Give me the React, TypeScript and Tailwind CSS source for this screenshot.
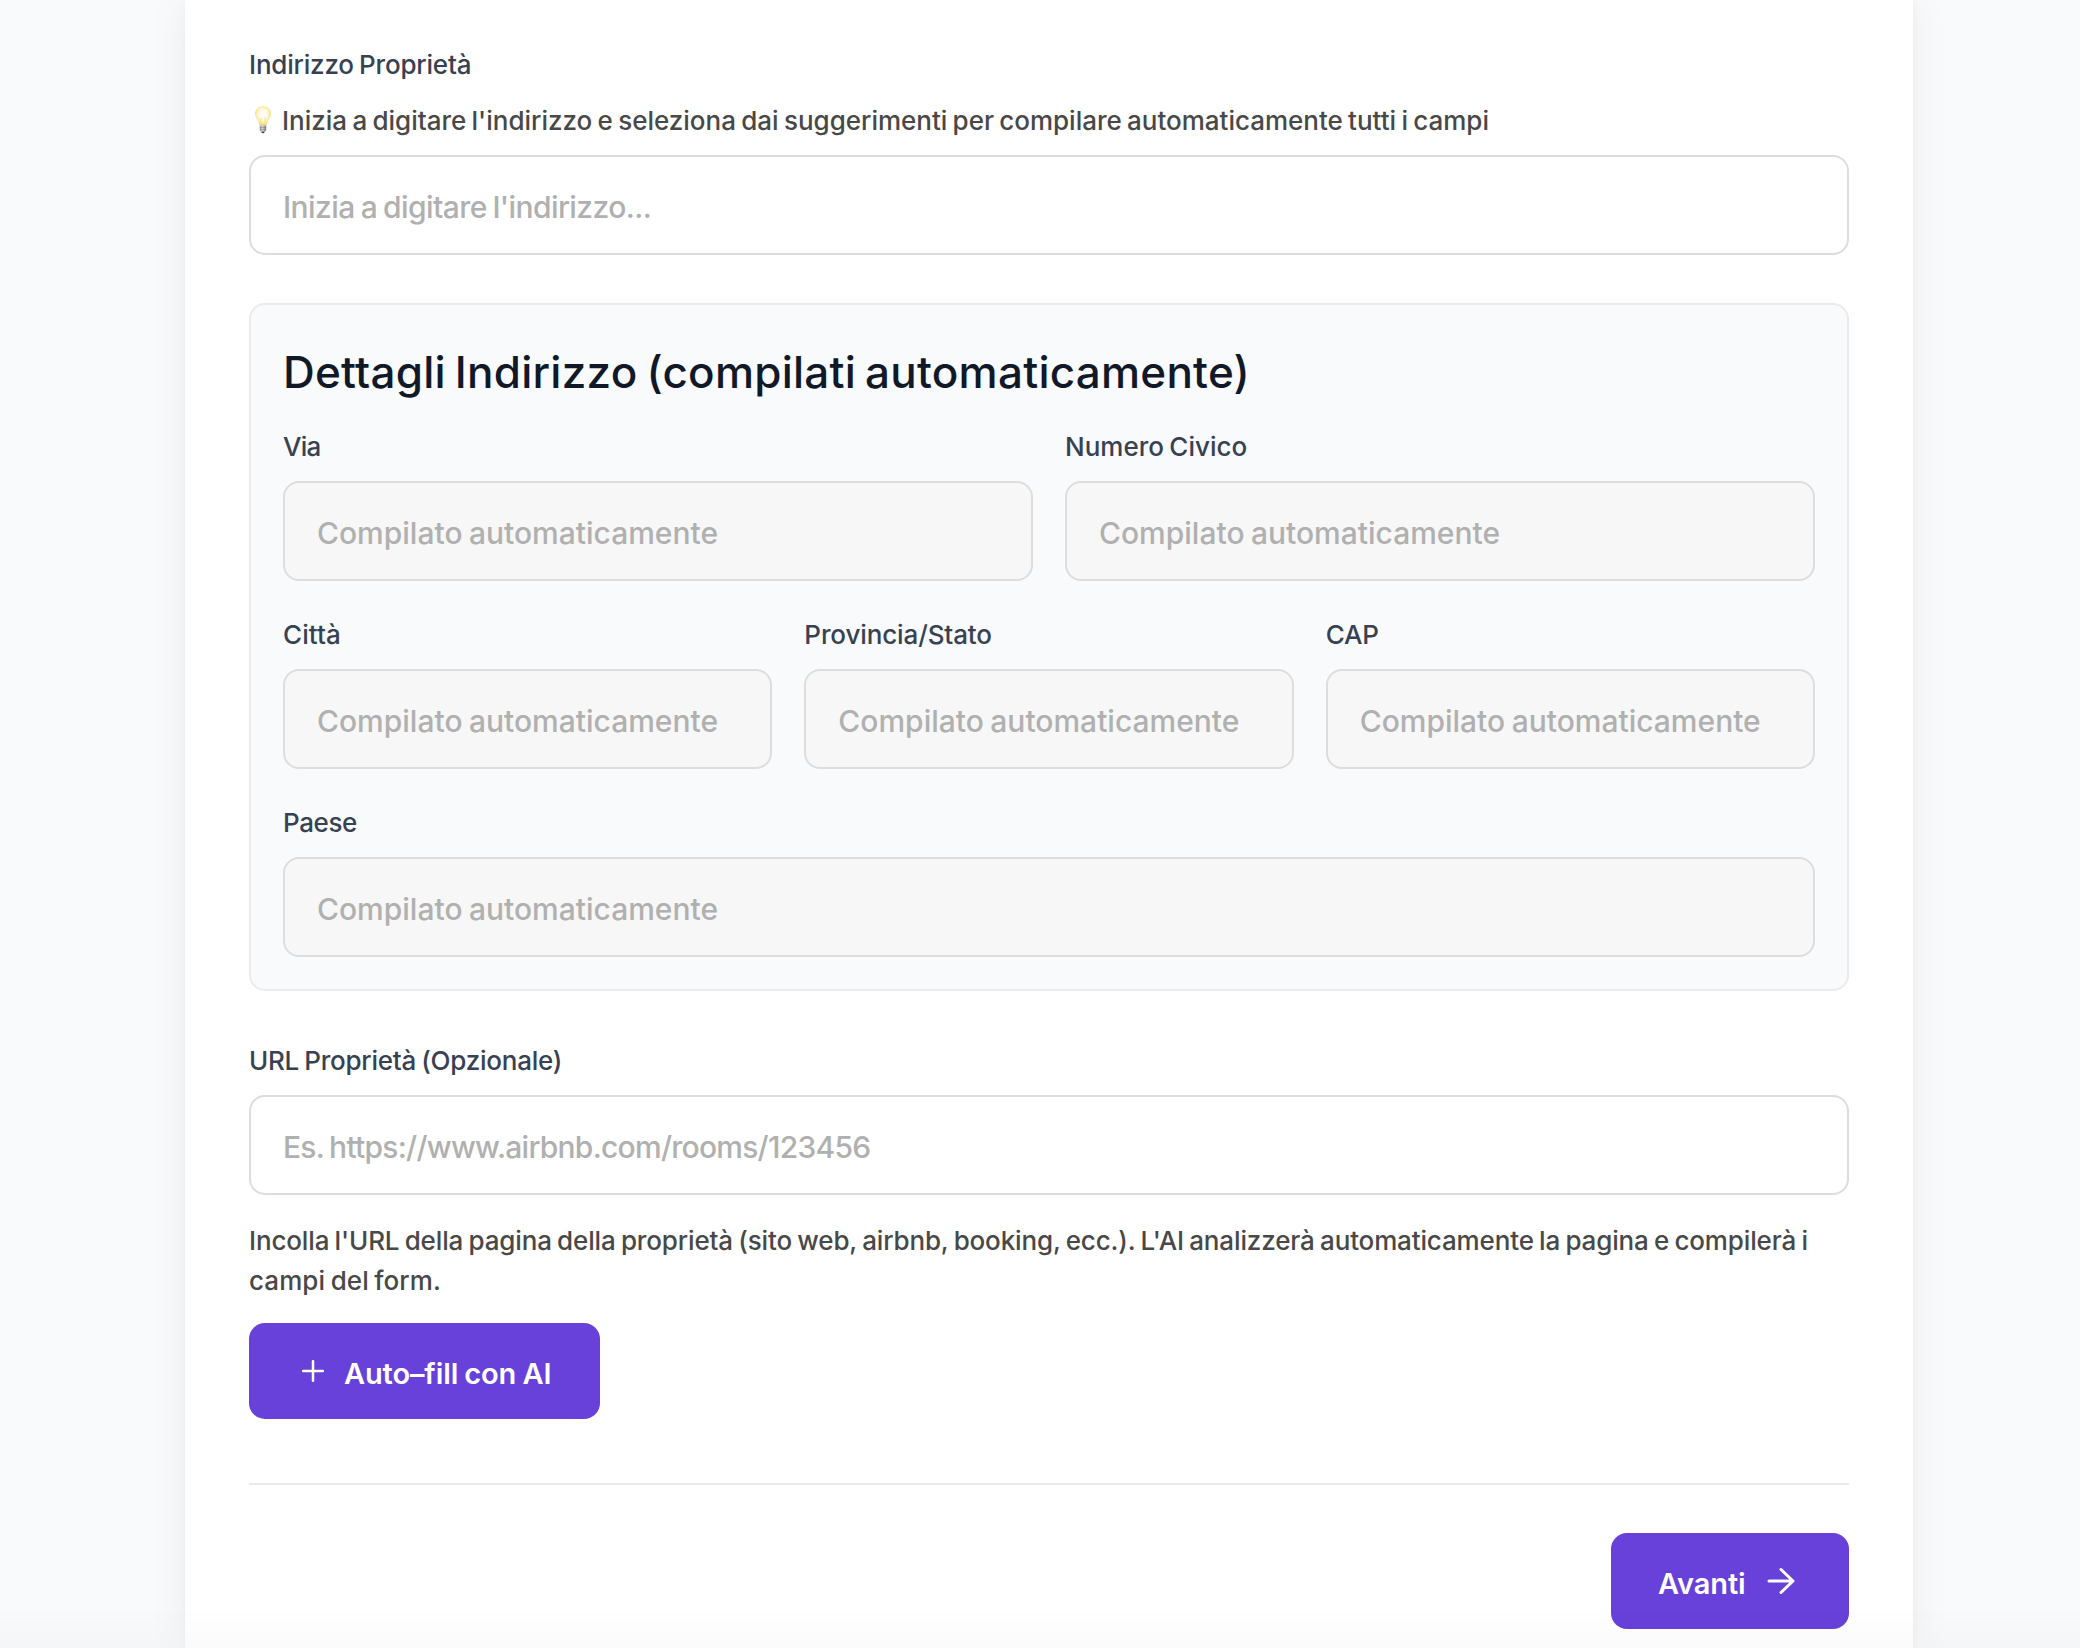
import React from "react";

function Label({ text, spacing = "" }: { text: string; spacing?: string }) {
  return (
    <label className={`mb-[14px] block text-[26px] leading-[40px] font-medium whitespace-nowrap text-[#374151] ${spacing}`}>
      {text}
    </label>
  );
}

function Input({ placeholder, filled = false, spacing = "" }: { placeholder: string; filled?: boolean; spacing?: string }) {
  return (
    <input
      type="text"
      readOnly={filled}
      placeholder={placeholder}
      className={`block h-[100px] w-full rounded-2xl border-2 border-[#dddddd] px-8 pt-1 text-[30px] font-medium text-[#222222] outline-none placeholder:text-[#b0b0b0] ${filled ? "bg-[#f7f7f7]" : "bg-white"} ${spacing}`}
    />
  );
}

function AutoField({ label, spacing }: { label: string; spacing?: string }) {
  return (
    <div className="min-w-0">
      <Label text={label} spacing={spacing} />
      <Input placeholder="Compilato automaticamente" filled spacing="tracking-[0px] [word-spacing:-1.5px]" />
    </div>
  );
}

function Bulb() {
  return (
    <svg width="18" height="29" viewBox="0 0 18 29" fill="none">
      <defs>
        <radialGradient id="glass" cx="0.5" cy="0.42" r="0.58">
          <stop offset="0" stopColor="#ffffff" />
          <stop offset="0.45" stopColor="#fffae0" />
          <stop offset="0.8" stopColor="#fae59a" />
          <stop offset="1" stopColor="#e8c766" />
        </radialGradient>
        <linearGradient id="base" x1="0" x2="1" y1="0" y2="0">
          <stop offset="0" stopColor="#8d8d8d" />
          <stop offset="0.4" stopColor="#dedede" />
          <stop offset="1" stopColor="#777777" />
        </linearGradient>
      </defs>
      <path
        d="M9 1C4.4 1 1 4.4 1 8.8c0 3.1 1.6 4.9 2.8 7 .9 1.6 1.1 3.4 1.8 4.3.5.6 1.2.7 3.4.7s2.9-.1 3.4-.7c.7-.9.9-2.7 1.8-4.3 1.2-2.1 2.8-3.9 2.8-7C17 4.4 13.6 1 9 1Z"
        fill="url(#glass)"
      />
      <path d="M7 20V12.5M11 20v-7.5" stroke="#f0dc97" strokeWidth="0.7" />
      <path d="M5.8 20.4h6.4v4.4c0 1-.8 1.7-1.7 1.7h-3c-.9 0-1.7-.7-1.7-1.7v-4.4Z" fill="url(#base)" />
      <path d="M5.8 22.4h6.4M5.9 24.5h6.2" stroke="#777777" strokeWidth="0.5" />
      <path d="M7.2 26.4h3.6c-.2 1.1-.9 1.8-1.8 1.8s-1.6-.7-1.8-1.8Z" fill="#3f3f3f" />
    </svg>
  );
}

export default function App() {
  return (
    <div className="h-[1648px] overflow-hidden bg-[#f8fafc] pr-[167px] pl-[185px] font-['Inter',sans-serif]">
      <main className="h-full bg-white px-16 pt-[45px] shadow-[0_0_40px_rgba(0,0,0,0.06),0_0_8px_rgba(0,0,0,0.03)]">
        <Label text="Indirizzo Proprietà" spacing="tracking-[-0.2px] [word-spacing:-1.5px]" />
        <div className="mt-4 mb-[14px] flex h-10 items-center">
          <div className="mr-[10px] -mt-[3px] ml-[5px] shrink-0">
            <Bulb />
          </div>
          <p className="text-[26px] leading-[40px] font-medium tracking-[-0.01px] whitespace-nowrap text-[#484848] [word-spacing:-1.6px]">
            Inizia a digitare l'indirizzo e seleziona dai suggerimenti per compilare automaticamente tutti i campi
          </p>
        </div>
        <Input placeholder="Inizia a digitare l'indirizzo..." spacing="tracking-[-0.57px] [word-spacing:-1.5px]" />

        <section className="mt-12 h-[688px] rounded-2xl border-2 border-[#ebebeb] bg-[#f8fafc] px-8 pt-[37px]">
          <h3 className="mb-[25px] text-[44px] leading-[60px] font-medium tracking-[0.24px] whitespace-nowrap text-[#111827] [word-spacing:-3px]">
            Dettagli Indirizzo (compilati automaticamente)
          </h3>
          <div className="grid grid-cols-2 gap-8">
            <AutoField label="Via" spacing="tracking-[-0.8px]" />
            <AutoField label="Numero Civico" spacing="tracking-[0px] [word-spacing:-1.5px]" />
          </div>
          <div className="mt-[34px] grid grid-cols-3 gap-8">
            <AutoField label="Città" spacing="tracking-[0.1px]" />
            <AutoField label="Provincia/Stato" spacing="tracking-[-0.12px]" />
            <AutoField label="CAP" spacing="tracking-[-0.2px]" />
          </div>
          <div className="mt-[34px]">
            <AutoField label="Paese" spacing="tracking-[-0.4px]" />
          </div>
        </section>

        <div className="mt-[50px]">
          <Label text="URL Proprietà (Opzionale)" spacing="tracking-[-0.24px] [word-spacing:-1.5px]" />
          <Input placeholder="Es. https://www.airbnb.com/rooms/123456" spacing="tracking-[-0.74px] [word-spacing:-2px]" />
        </div>
        <p className="mt-[26px] text-[26px] leading-[40px] font-medium whitespace-nowrap text-[#484848] [word-spacing:-1.5px]">
          <span className="tracking-[-0.14px]">
            Incolla l'URL della pagina della proprietà (sito web, airbnb, booking, ecc.). L'AI analizzerà automaticamente la pagina e compilerà i
          </span>
          <br />
          <span className="tracking-[0.08px]">campi del form.</span>
        </p>

        <button className="mt-[22px] flex h-24 w-[351px] items-center rounded-2xl bg-[#6741d9] pl-[53px] text-white">
          <svg width="22" height="22" viewBox="0 0 22 22" fill="none" stroke="currentColor" strokeWidth="2.5" strokeLinecap="round">
            <path d="M11 1.2v19.6M1.2 11h19.6" />
          </svg>
          <span className="ml-5 pt-[6px] text-[29px] leading-[40px] font-semibold tracking-[-0.12px] whitespace-nowrap [word-spacing:-1px]">
            Auto–fill con AI
          </span>
        </button>

        <div className="mt-16 flex justify-end border-t-2 border-[#ebebeb] pt-12">
          <button className="flex h-24 w-[238px] items-center rounded-2xl bg-[#6741d9] pl-[47px] text-white">
            <span className="pt-[6px] text-[29px] leading-[40px] font-semibold tracking-[-0.1px] whitespace-nowrap">Avanti</span>
            <svg className="ml-[21px]" width="28" height="28" viewBox="0 0 28 28" fill="none" stroke="currentColor" strokeWidth="3" strokeLinecap="round" strokeLinejoin="round">
              <path d="M2 14h24M14 2.5 26 14 14 25.5" />
            </svg>
          </button>
        </div>
      </main>
      <div className="pointer-events-none fixed inset-x-0 bottom-0 h-10 bg-linear-to-b from-black/0 to-black/[0.018]" />
    </div>
  );
}
